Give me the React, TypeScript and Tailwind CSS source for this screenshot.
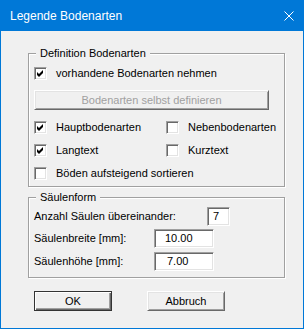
const font = { fontFamily: '"Liberation Sans", Arial, sans-serif' };

type BoxProps = { checked?: boolean; label: string };

const CheckBox = ({ checked, label }: BoxProps) => (
    <div className="flex items-center h-[13px]">
        <div className="w-[13px] h-[13px] shrink-0 bg-white border border-t-[#a0a0a0] border-l-[#a0a0a0] border-b-white border-r-white shadow-[inset_1px_1px_0_#696969,inset_-1px_-1px_0_#e3e3e3]">
            {checked && (
                <svg width="11" height="11" viewBox="0 0 11 11" className="block">
                    <path d="M2 4 L4 6 L8 2 L8 5 L4 9 L2 7 Z" fill="#000" />
                </svg>
            )}
        </div>
        <span className="ml-[9px] text-[11px] leading-[13px] text-black whitespace-nowrap">{label}</span>
    </div>
);

const Field = ({ value, className }: { value: string; className: string }) => (
    <div className={`h-[19px] bg-white border border-t-[#a0a0a0] border-l-[#a0a0a0] border-b-white border-r-white shadow-[inset_1px_1px_0_#696969,inset_-1px_-1px_0_#e3e3e3] text-[11px] leading-[17px] text-black ${className}`}>
        {value}
    </div>
);

const Group = ({ title, className, children }: { title: string; className: string; children: React.ReactNode }) => (
    <div className={`relative ml-[27px] w-[257px] border border-[#a0a0a0] shadow-[inset_1px_1px_0_#fff,1px_1px_0_#fff] ${className}`}>
        <span className="absolute left-[7px] top-[-8px] px-[4px] bg-[#f0f0f0] text-[11px] leading-[14px] text-black whitespace-nowrap">
            {title}
        </span>
        {children}
    </div>
);

export default function App() {
    return (
        <div style={font} className="w-[304px] h-[329px] border border-[#0078d7] bg-[#f0f0f0] flex flex-col select-none">
            <div className="h-[30px] bg-[#0078d7] flex items-center pl-[9px] pr-[9px]">
                <span className="text-white text-[12px]">Legende Bodenarten</span>
                <svg width="10" height="10" viewBox="0 0 10 10" className="ml-auto">
                    <path d="M0.5 0.5 L9.5 9.5 M9.5 0.5 L0.5 9.5" stroke="#fff" strokeWidth="1" />
                </svg>
            </div>

            <Group title="Definition Bodenarten" className="mt-[22px] pl-[5px] pt-[13px] pb-[6px]">
                <CheckBox checked label="vorhandene Bodenarten nehmen" />
                <div className="mt-[10px] w-[235px] h-[20px] border border-t-white border-l-white border-b-[#696969] border-r-[#696969] shadow-[inset_1px_1px_0_#e3e3e3,inset_-1px_-1px_0_#a0a0a0] flex items-center justify-center text-[11px] text-[#a0a0a0]">
                    Bodenarten selbst definieren
                </div>
                <div className="mt-[11px] grid grid-cols-[132px_1fr] gap-y-[10px]">
                    <CheckBox checked label="Hauptbodenarten" />
                    <CheckBox label="Nebenbodenarten" />
                    <CheckBox checked label="Langtext" />
                    <CheckBox label="Kurztext" />
                    <CheckBox label="Böden aufsteigend sortieren" />
                </div>
            </Group>

            <Group title="Säulenform" className="mt-[10px] pl-[5px] pt-[9px] pb-[6px]">
                <div className="flex items-center">
                    <span className="w-[173px] text-[11px] text-black">Anzahl Säulen übereinander:</span>
                    <Field value="7" className="w-[23px] pl-[5px]" />
                </div>
                <div className="flex items-center mt-[3px]">
                    <span className="w-[120px] text-[11px] text-black">Säulenbreite [mm]:</span>
                    <Field value="10.00" className="w-[60px] pl-[10px]" />
                </div>
                <div className="flex items-center mt-[4px]">
                    <span className="w-[120px] text-[11px] text-black">Säulenhöhe [mm]:</span>
                    <Field value="7.00" className="w-[60px] pl-[12px]" />
                </div>
            </Group>

            <div className="mt-[13px] ml-[33px] flex gap-[35px]">
                <div className="w-[78px] h-[20px] border border-[#333] shadow-[inset_1px_1px_0_#fff,inset_-1px_-1px_0_#696969,inset_-2px_-2px_0_#a0a0a0] flex items-center justify-center text-[11px] text-black">
                    OK
                </div>
                <div className="w-[78px] h-[20px] border border-t-white border-l-white border-b-[#696969] border-r-[#696969] shadow-[inset_1px_1px_0_#e3e3e3,inset_-1px_-1px_0_#a0a0a0] flex items-center justify-center text-[11px] text-black">
                    Abbruch
                </div>
            </div>
        </div>
    );
}
